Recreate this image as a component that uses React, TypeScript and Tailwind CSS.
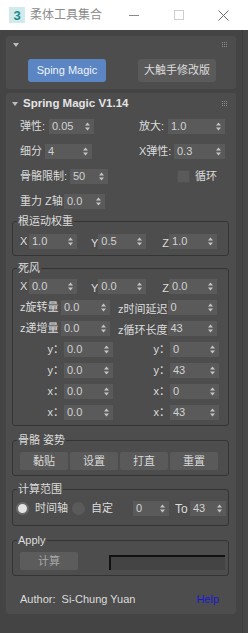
import React from "react";

const Arrows = () => (
  <svg width="5" height="9" viewBox="0 0 5 9" className="shrink-0">
    <polygon points="0,3.5 2.5,0.5 5,3.5" fill="#c4c4c4" />
    <polygon points="0,5.5 2.5,8.5 5,5.5" fill="#c4c4c4" />
  </svg>
);

const Spin = ({ v, w, className = "" }: { v: string; w: string; className?: string }) => (
  <div className={`${w} ${className} h-[15px] shrink-0 bg-[#5a5a5a] flex items-center justify-between pl-[3px] pr-[4px]`}>
    <span className="text-[11px] leading-none text-[#d2d2d2]">{v}</span>
    <Arrows />
  </div>
);

const Grip = () => (
  <svg width="6" height="6" viewBox="0 0 6 6">
    {[0, 2, 4].map((y) =>
      [0, 2, 4].map((x) => <rect key={`${x}-${y}`} x={x} y={y} width="1" height="1" fill="#8c8c8c" />)
    )}
  </svg>
);

const Caret = () => (
  <svg width="6" height="4" viewBox="0 0 6 4">
    <polygon points="0,0 6,0 3,4" fill="#bdbdbd" />
  </svg>
);

const Group = ({ title, children, className = "" }: { title: string; children: React.ReactNode; className?: string }) => (
  <fieldset className={`mx-[6px] w-[217px] border border-[#343434] rounded-[3px] ${className}`}>
    <legend className="ml-[4px] px-[1px] text-[11px] leading-[14px] text-[#dcdcdc]">{title}</legend>
    {children}
  </fieldset>
);

const Lbl = ({ t, w, right = false }: { t: string; w: string; right?: boolean }) => (
  <span className={`${w} shrink-0 whitespace-nowrap text-[11px] leading-none text-[#dcdcdc] ${right ? "text-right" : ""}`}>
    {t}
  </span>
);

const XYZ = ({ x, y, z }: { x: string; y: string; z: string }) => (
  <div className="h-[21px] flex items-center pl-[7px]">
    <Lbl t="X" w="w-[9px]" />
    <Spin v={x} w="w-[48px]" />
    <span className="ml-[14px]"><Lbl t="Y" w="w-[8px]" /></span>
    <Spin v={y} w="w-[48px]" />
    <span className="ml-[16px]"><Lbl t="Z" w="w-[9px]" /></span>
    <Spin v={z} w="w-[48px]" />
  </div>
);

const Pair = ({ a, av, b, bv }: { a: string; av: string; b: string; bv: string }) => (
  <div className="h-[21px] flex items-center pl-[7px]">
    <Lbl t={a} w="w-[44px]" right />
    <Spin v={av} w="w-[49px]" />
    <Lbl t={b} w="w-[57px]" right />
    <Spin v={bv} w="w-[49px]" />
  </div>
);

export default function App() {
  return (
    <div className="w-[248px] h-[633px] overflow-hidden bg-[#444444] font-['Liberation_Sans','Noto_Sans_CJK_SC',sans-serif] text-[#dcdcdc]">
      {/* title bar */}
      <div className="h-[30px] bg-white flex items-center">
        <div className="ml-[9px] w-[16px] h-[16px] bg-[#d3eaea] flex items-center justify-center">
          <span className="text-[13px] font-bold leading-none text-[#168c90]">3</span>
        </div>
        <span className="ml-[5px] text-[12px] text-[#8c8c8c]">柔体工具集合</span>
        <div className="ml-auto mr-[2px] flex">
          <div className="w-[45px] h-[30px] flex items-center justify-center">
            <svg width="10" height="10" viewBox="0 0 10 10">
              <line x1="0" y1="5.5" x2="10" y2="5.5" stroke="#8a8a8a" strokeWidth="1" />
            </svg>
          </div>
          <div className="w-[45px] h-[30px] flex items-center justify-center">
            <svg width="10" height="10" viewBox="0 0 10 10">
              <rect x="0.5" y="0.5" width="9" height="9" fill="none" stroke="#cfcfcf" strokeWidth="1" />
            </svg>
          </div>
          <div className="w-[45px] h-[30px] flex items-center justify-center">
            <svg width="11" height="11" viewBox="0 0 11 11">
              <path d="M0.5 0.5 L10.5 10.5 M10.5 0.5 L0.5 10.5" stroke="#6a6a6a" strokeWidth="1" />
            </svg>
          </div>
        </div>
      </div>

      <div className="flex h-[603px]">
        <div className="w-[242px] px-[6px] pt-[6px]">
          {/* rollout 1 */}
          <div className="h-[53px] bg-[#4d4d4d] rounded-[3px]">
            <div className="h-[17px] flex items-center justify-between pl-[7px] pr-[8px] pt-[1px]">
              <Caret />
              <Grip />
            </div>
            <div className="mt-[6px] flex pl-[22px] gap-[32px]">
              <button className="w-[78px] h-[23px] rounded-[3px] bg-[#5b86c3] text-[11px] text-[#eef2f8]">Sping Magic</button>
              <button className="w-[78px] h-[23px] rounded-[3px] bg-[#5a5a5a] text-[11px] text-[#dcdcdc]">大触手修改版</button>
            </div>
          </div>

          {/* rollout 2 */}
          <div className="mt-[4px] h-[521px] bg-[#4d4d4d] rounded-[3px]">
            <div className="h-[21px] flex items-center pl-[6px] pr-[8px]">
              <Caret />
              <span className="ml-[5px] text-[11.5px] font-bold text-[#e4e4e4]">Spring Magic V1.14</span>
              <span className="ml-auto"><Grip /></span>
            </div>

            <div className="pl-[14px]">
              <div className="h-[25px] flex items-center">
                <div className="w-[119px] flex items-center">
                  <Lbl t="弹性:" w="w-[29px]" />
                  <Spin v="0.05" w="w-[45px]" />
                </div>
                <Lbl t="放大:" w="w-[29px]" />
                <Spin v="1.0" w="w-[57px]" />
              </div>
              <div className="h-[25px] flex items-center">
                <div className="w-[119px] flex items-center">
                  <Lbl t="细分" w="w-[25px]" />
                  <Spin v="4" w="w-[47px]" />
                </div>
                <Lbl t="X弹性:" w="w-[35px]" />
                <Spin v="0.3" w="w-[51px]" />
              </div>
              <div className="h-[25px] flex items-center">
                <div className="w-[119px] flex items-center">
                  <Lbl t="骨骼限制:" w="w-[50px]" />
                  <Spin v="50" w="w-[38px]" />
                </div>
                <div className="ml-[38px] w-[13px] h-[13px] bg-[#5a5a5a] border border-[#505050]" />
                <span className="ml-[5px] text-[11px] leading-none">循环</span>
              </div>
              <div className="h-[25px] flex items-center">
                <Lbl t="重力 Z轴" w="w-[44px]" />
                <Spin v="0.0" w="w-[41px]" />
              </div>
            </div>

            <Group title="根运动权重">
              <div className="pt-[3px] pb-[3px]">
                <XYZ x="1.0" y="0.5" z="1.0" />
              </div>
            </Group>

            <Group title="死风" className="mt-[5px]">
              <div className="pt-[1px] pb-[2px]">
                <XYZ x="0.0" y="0.0" z="0.0" />
                <div className="h-[21px] flex items-center pl-[7px]">
                  <Lbl t="z旋转量" w="w-[41px]" />
                  <Spin v="0.0" w="w-[49px]" />
                  <span className="ml-[8px]"><Lbl t="z时间延迟" w="w-[52px]" /></span>
                  <Spin v="0" w="w-[49px]" />
                </div>
                <div className="h-[21px] flex items-center pl-[7px]">
                  <Lbl t="z递增量" w="w-[41px]" />
                  <Spin v="0.0" w="w-[49px]" />
                  <span className="ml-[8px]"><Lbl t="z循环长度" w="w-[52px]" /></span>
                  <Spin v="43" w="w-[49px]" />
                </div>
                <Pair a="y：" av="0.0" b="y：" bv="0" />
                <Pair a="y：" av="0.0" b="y：" bv="43" />
                <Pair a="x：" av="0.0" b="x：" bv="0" />
                <Pair a="x：" av="0.0" b="x：" bv="43" />
              </div>
            </Group>

            <Group title="骨骼 姿势" className="mt-[7px]">
              <div className="pt-[5px] pb-[5px] pl-[7px] flex gap-[2px]">
                {["黏贴", "设置", "打直", "重置"].map((t) => (
                  <button key={t} className="w-[48px] h-[18px] rounded-[2px] bg-[#5a5a5a] text-[11px] leading-none text-[#d8d8d8]">
                    {t}
                  </button>
                ))}
              </div>
            </Group>

            <Group title="计算范围" className="mt-[6px]">
              <div className="pt-[2px] pb-[6px]">
                <div className="h-[21px] flex items-center pl-[3px]">
                  <div className="w-[13px] h-[13px] rounded-full bg-[#e4e4e4] border-2 border-[#6a6a6a]" />
                  <span className="ml-[6px] w-[33px] text-[11px] leading-none">时间轴</span>
                  <div className="ml-[4px] w-[13px] h-[13px] rounded-full bg-[#5a5a5a]" />
                  <span className="ml-[6px] w-[22px] text-[11px] leading-none">自定</span>
                  <Spin v="0" w="w-[36px]" className="ml-[20px]" />
                  <span className="ml-[6px] w-[14px] text-[12px] leading-none">To</span>
                  <Spin v="43" w="w-[36px]" className="ml-[1px]" />
                </div>
              </div>
            </Group>

            <Group title="Apply" className="mt-[7px]">
              <div className="pt-[5px] pb-[5px] pl-[7px] flex items-end">
                <button className="w-[58px] h-[18px] rounded-[2px] bg-[#5c5c5c] text-[11px] leading-none text-[#a8a8a8]">计算</button>
                <div className="ml-[31px] w-[116px] h-[15px] bg-[#444444] border-t-2 border-l-2 border-[#111111]" />
              </div>
            </Group>

            <div className="mt-[13px] h-[20px] flex items-center justify-between pl-[14px] pr-[17px] text-[11px]">
              <span className="whitespace-pre text-[#dcdcdc]">Author:  Si-Chung Yuan</span>
              <span className="text-[#1818d4]">Help</span>
            </div>
          </div>
        </div>
        <div className="w-[6px] bg-[#474747] border-l border-[#3c3c3c]" />
      </div>
    </div>
  );
}
